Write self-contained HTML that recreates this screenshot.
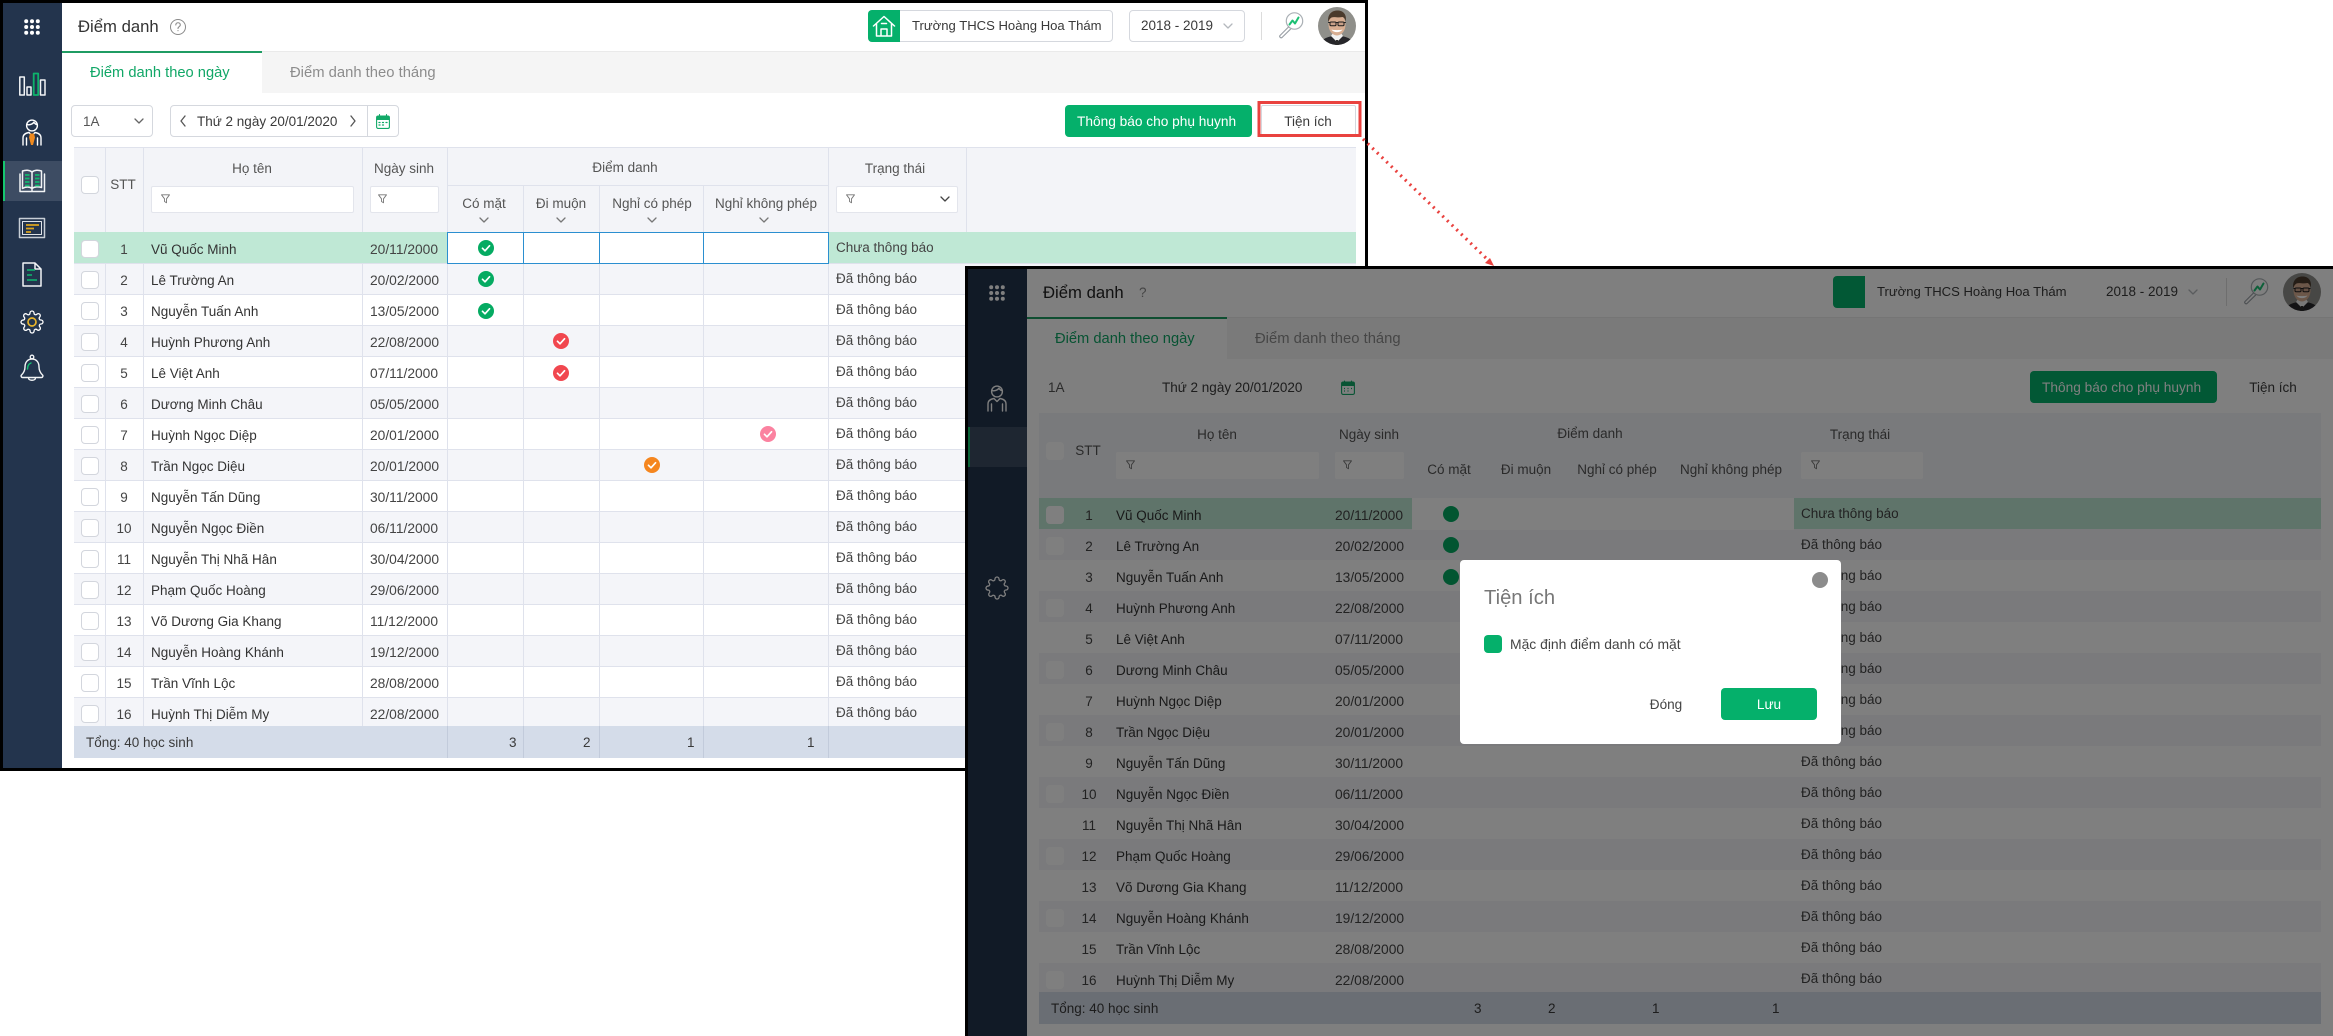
<!DOCTYPE html>
<html lang="vi"><head><meta charset="utf-8"><title>Điểm danh</title>
<style>
*{box-sizing:border-box;margin:0;padding:0}
html,body{width:2333px;height:1036px;overflow:hidden;background:#fff}
body{position:relative;font:13.5px/20px "Liberation Sans","Noto Sans CJK JP",sans-serif;color:#3a3a3a}
.win{position:absolute;background:#000;overflow:hidden}
.w1{left:0;top:0;width:1368px;height:771px}
.w2{left:965px;top:266px;width:1368px;height:770px}
.win>*{position:absolute}
.page{left:3px;top:3px;width:1365px;height:767px;background:#fff}
.w1 .page{width:1362px;height:765px}
.side{left:3px;top:3px;width:59px;height:767px;background:#23344d}
.act{left:3px;top:161px;width:59px;height:40px;background:#3d4c63;border-left:2px solid #16c76f}
.hline{left:62px;top:51px;width:1306px;height:42px;background:#f5f5f5;border-top:1px solid #eaeaea}
.tab{left:62px;top:51px;width:200px;height:42px;background:#fff;border-top:2px solid #1f9c63}
.t{position:absolute;white-space:nowrap;height:20px;line-height:20px}
.c{transform:translateX(-50%)}
.sch{font-size:13.1px}
.box{background:#fff;border:1px solid #d5d8de;border-radius:4px}
.btn{background:#05b06b;border-radius:4px}
.thead{left:74px;top:147px;width:1282px;height:85px;background:#f3f4f8;border-top:1px solid #dfe2ec}
.hl{position:absolute;width:1px;background:#dfe2ec}
.ins{position:absolute;background:#fff;border:1px solid #e3e5ec;border-radius:2px}
.cb{position:absolute;left:7px;width:18px;height:18px;background:#fff;border:1px solid #d3d6dd;border-radius:4px}
.sc{left:74px;top:232px;width:1282px;height:494px;overflow:hidden;background:#fff;z-index:0}
.r{position:absolute;left:0;width:1282px;height:31px;background:#fff;border-top:1px solid #dfe2ec}
.r.e{background:#f4f5f9}
.r.g{background:#bfe8d5;border-top:0;z-index:2}
.r .cb{top:7px}
.r.g .cb{top:8px}
.n,.nm,.d,.st{position:absolute;white-space:nowrap;top:7px}
.n{left:30px;width:40px;text-align:center;color:#444}
.nm{left:77px;color:#333}
.d{left:296px;color:#444;font-size:13.8px}
.st{left:762px;top:5px;color:#444}
.r.g .n,.r.g .nm,.r.g .d{top:8px}
.r.g .st{top:6px}
.cell{position:absolute;left:373px;top:0;width:382px;height:32px;background:#fff;border:1px solid #2b8fd0}
.cell i{position:absolute;top:0;bottom:0;width:1px;background:#2b8fd0}
.vl{position:absolute;top:0;bottom:0;width:1px;background:#dfe2ec;z-index:1}
.foot{left:74px;top:726px;width:1282px;height:32px;background:#d4dce9}
.foot i{position:absolute;top:0;bottom:0;width:1px;background:#c2cbdb}
.ov{left:0;top:0;pointer-events:none}
.ovl{left:0;top:0;width:100%;height:100%;background:rgba(0,0,0,.5)}
.w2 .box,.w2 .ins,.w2 .cb{border-color:transparent}
.w2 .hl,.w2 .vl,.w2 .foot i{display:none}
.w2 .r{border-top-color:transparent}
.w2 .thead{border-top-color:transparent}
.w2 .cell{border-color:transparent}
.w2 .cell i{display:none}
.w2 .box{background:transparent}
.modal{position:absolute;left:1460px;top:560px;width:381px;height:184px;background:#fff;border-radius:4px}
.modal>*{position:absolute}
</style></head><body>

<!-- WINDOW 1 -->
<div class="win w1">
<div class="page"></div>
<div class="side" style="height:765px"></div>
<div class="act"></div>
<div class="t" style="left:78px;top:17px;font-size:16.7px;color:#333">Điểm danh</div>
<div class="hline" style="width:1303px"></div><div class="tab"></div>
<div class="t" style="left:90px;top:63px;font-size:14.7px;color:#11a767">Điểm danh theo ngày</div>
<div class="t" style="left:290px;top:63px;font-size:14.8px;color:#8c8c8c">Điểm danh theo tháng</div>
<div class="box" style="left:868px;top:10px;width:245px;height:32px"></div>
<div style="left:868px;top:10px;width:32px;height:32px;background:#05b06b;border-radius:4px 0 0 4px"></div>
<div class="t sch" style="left:912px;top:16px">Trường THCS Hoàng Hoa Thám</div>
<div class="box" style="left:1129px;top:10px;width:116px;height:32px"></div>
<div class="t" style="left:1141px;top:16px">2018 - 2019</div>
<div style="left:1261px;top:12px;width:1px;height:28px;background:#dcdcdc"></div>
<div class="box" style="left:71px;top:105px;width:82px;height:32px"></div>
<div class="t" style="left:83px;top:112px;color:#555">1A</div>
<div class="box" style="left:170px;top:105px;width:229px;height:32px"></div>
<div style="left:367px;top:105px;width:1px;height:32px;background:#d5d8de"></div>
<div class="t" style="left:197px;top:112px">Thứ 2 ngày 20/01/2020</div>
<div class="btn" style="left:1065px;top:105px;width:187px;height:32px"></div>
<div class="t" style="left:1077px;top:112px;color:#fff;font-size:13.7px">Thông báo cho phụ huynh</div>
<div class="box" style="left:1261px;top:105px;width:95px;height:32px;border-radius:2px"></div>
<div class="t c" style="left:1308px;top:112px">Tiện ích</div>

<div class="thead"></div>
<div class="hl" style="left:105px;top:147px;height:85px"></div>
<div class="hl" style="left:143px;top:147px;height:85px"></div>
<div class="hl" style="left:362px;top:147px;height:85px"></div>
<div class="hl" style="left:447px;top:147px;height:85px"></div>
<div class="hl" style="left:523px;top:186px;height:46px"></div>
<div class="hl" style="left:599px;top:186px;height:46px"></div>
<div class="hl" style="left:703px;top:186px;height:46px"></div>
<div class="hl" style="left:828px;top:147px;height:85px"></div>
<div class="hl" style="left:966px;top:147px;height:85px"></div>
<div style="left:447px;top:185px;width:381px;height:1px;background:#dfe2ec"></div>
<div class="cb" style="left:81px;top:176px"></div>
<div class="t c" style="left:123px;top:175px;color:#555">STT</div>
<div class="t c" style="left:252px;top:159px;color:#555">Họ tên</div>
<div class="t c" style="left:404px;top:159px;color:#555">Ngày sinh</div>
<div class="t c" style="left:625px;top:158px;color:#555">Điểm danh</div>
<div class="t c" style="left:895px;top:159px;color:#555">Trạng thái</div>
<div class="t c" style="left:484px;top:194px;color:#555">Có mặt</div>
<div class="t c" style="left:561px;top:194px;color:#555">Đi muộn</div>
<div class="t c" style="left:652px;top:194px;color:#555">Nghỉ có phép</div>
<div class="t c" style="left:766px;top:194px;color:#555">Nghỉ không phép</div>
<div class="ins" style="left:151px;top:186px;width:203px;height:27px"></div>
<div class="ins" style="left:370px;top:186px;width:69px;height:27px"></div>
<div class="ins" style="left:836px;top:186px;width:122px;height:27px"></div>

<div class="sc">
<i class="vl" style="left:31px"></i><i class="vl" style="left:69px"></i><i class="vl" style="left:288px"></i><i class="vl" style="left:373px"></i><i class="vl" style="left:449px"></i><i class="vl" style="left:525px"></i><i class="vl" style="left:629px"></i><i class="vl" style="left:754px"></i>
<div class="r g" style="top:0"><i class="cb"></i><span class="n">1</span><span class="nm">Vũ Quốc Minh</span><span class="d">20/11/2000</span><div class="cell"><i style="left:75px"></i><i style="left:151px"></i><i style="left:255px"></i></div><span class="st">Chưa thông báo</span></div>
<div class="r e" style="top:31px"><i class="cb"></i><span class="n">2</span><span class="nm">Lê Trường An</span><span class="d">20/02/2000</span><span class="st">Đã thông báo</span></div>
<div class="r" style="top:62px"><i class="cb"></i><span class="n">3</span><span class="nm">Nguyễn Tuấn Anh</span><span class="d">13/05/2000</span><span class="st">Đã thông báo</span></div>
<div class="r e" style="top:93px"><i class="cb"></i><span class="n">4</span><span class="nm">Huỳnh Phương Anh</span><span class="d">22/08/2000</span><span class="st">Đã thông báo</span></div>
<div class="r" style="top:124px"><i class="cb"></i><span class="n">5</span><span class="nm">Lê Việt Anh</span><span class="d">07/11/2000</span><span class="st">Đã thông báo</span></div>
<div class="r e" style="top:155px"><i class="cb"></i><span class="n">6</span><span class="nm">Dương Minh Châu</span><span class="d">05/05/2000</span><span class="st">Đã thông báo</span></div>
<div class="r" style="top:186px"><i class="cb"></i><span class="n">7</span><span class="nm">Huỳnh Ngọc Diệp</span><span class="d">20/01/2000</span><span class="st">Đã thông báo</span></div>
<div class="r e" style="top:217px"><i class="cb"></i><span class="n">8</span><span class="nm">Trần Ngọc Diệu</span><span class="d">20/01/2000</span><span class="st">Đã thông báo</span></div>
<div class="r" style="top:248px"><i class="cb"></i><span class="n">9</span><span class="nm">Nguyễn Tấn Dũng</span><span class="d">30/11/2000</span><span class="st">Đã thông báo</span></div>
<div class="r e" style="top:279px"><i class="cb"></i><span class="n">10</span><span class="nm">Nguyễn Ngọc Điền</span><span class="d">06/11/2000</span><span class="st">Đã thông báo</span></div>
<div class="r" style="top:310px"><i class="cb"></i><span class="n">11</span><span class="nm">Nguyễn Thị Nhã Hân</span><span class="d">30/04/2000</span><span class="st">Đã thông báo</span></div>
<div class="r e" style="top:341px"><i class="cb"></i><span class="n">12</span><span class="nm">Phạm Quốc Hoàng</span><span class="d">29/06/2000</span><span class="st">Đã thông báo</span></div>
<div class="r" style="top:372px"><i class="cb"></i><span class="n">13</span><span class="nm">Võ Dương Gia Khang</span><span class="d">11/12/2000</span><span class="st">Đã thông báo</span></div>
<div class="r e" style="top:403px"><i class="cb"></i><span class="n">14</span><span class="nm">Nguyễn Hoàng Khánh</span><span class="d">19/12/2000</span><span class="st">Đã thông báo</span></div>
<div class="r" style="top:434px"><i class="cb"></i><span class="n">15</span><span class="nm">Trần Vĩnh Lộc</span><span class="d">28/08/2000</span><span class="st">Đã thông báo</span></div>
<div class="r e" style="top:465px"><i class="cb"></i><span class="n">16</span><span class="nm">Huỳnh Thị Diễm My</span><span class="d">22/08/2000</span><span class="st">Đã thông báo</span></div>
</div>
<div class="foot"><i style="left:373px"></i><i style="left:449px"></i><i style="left:525px"></i><i style="left:629px"></i><i style="left:754px"></i></div>
<div class="t" style="left:86px;top:733px">Tổng: 40 học sinh</div>
<div class="t" style="left:509px;top:733px">3</div>
<div class="t" style="left:583px;top:733px">2</div>
<div class="t" style="left:687px;top:733px">1</div>
<div class="t" style="left:807px;top:733px">1</div>

<svg class="ov" width="1368" height="771" fill="none" stroke-linecap="round" stroke-linejoin="round">
<defs>
<symbol id="grid" viewBox="0 0 16 16"><g fill="#fff"><circle cx="2.2" cy="2.2" r="2"/><circle cx="8" cy="2.2" r="2"/><circle cx="13.8" cy="2.2" r="2"/><circle cx="2.2" cy="8" r="2"/><circle cx="8" cy="8" r="2"/><circle cx="13.8" cy="8" r="2"/><circle cx="2.2" cy="13.8" r="2"/><circle cx="8" cy="13.8" r="2"/><circle cx="13.8" cy="13.8" r="2"/></g></symbol>
<symbol id="person" viewBox="0 0 20 27"><g fill="none" stroke="#fff" stroke-width="1.4" stroke-linecap="round" stroke-linejoin="round"><circle cx="10" cy="6.5" r="5.4"/><path d="M4.8 5.6c2 .6 6-.2 7-2.4 1 1.4 2 2.3 3.4 2.4"/><path d="M1 26v-7c0-3.500 3-5 6-5.500M19 26v-7c0-3.500-3-5-6-5.500M4.500 26v-7M15.500 26v-7M7 13.500l3 3 3-3"/></g></symbol>
<symbol id="gear" viewBox="0 0 24 24"><path fill="none" stroke="#fff" stroke-width="1.300" stroke-linejoin="round" d="M19.400 15a1.650 1.650 0 0 0 .33 1.820l.06.06a2 2 0 0 1 0 2.830 2 2 0 0 1-2.830 0l-.06-.06a1.650 1.650 0 0 0-1.820-.33 1.650 1.650 0 0 0-1 1.510V21a2 2 0 0 1-2 2 2 2 0 0 1-2-2v-.09A1.650 1.650 0 0 0 9 19.400a1.650 1.650 0 0 0-1.820.33l-.06.06a2 2 0 0 1-2.830 0 2 2 0 0 1 0-2.830l.06-.06a1.650 1.650 0 0 0 .33-1.820 1.650 1.650 0 0 0-1.510-1H3a2 2 0 0 1-2-2 2 2 0 0 1 2-2h.09A1.650 1.650 0 0 0 4.600 9a1.650 1.650 0 0 0-.33-1.820l-.06-.06a2 2 0 0 1 0-2.830 2 2 0 0 1 2.830 0l.06.06a1.650 1.650 0 0 0 1.820.33H9a1.650 1.650 0 0 0 1-1.510V3a2 2 0 0 1 2-2 2 2 0 0 1 2 2v.09a1.650 1.650 0 0 0 1 1.510 1.650 1.650 0 0 0 1.820-.33l.06-.06a2 2 0 0 1 2.830 0 2 2 0 0 1 0 2.830l-.06.06a1.650 1.650 0 0 0-.33 1.820V9a1.650 1.650 0 0 0 1.510 1H21a2 2 0 0 1 2 2 2 2 0 0 1-2 2h-.09a1.650 1.650 0 0 0-1.510 1z"/></symbol>
<symbol id="cal" viewBox="0 0 14 15"><g fill="none" stroke="#12a968" stroke-width="1.100"><rect x=".6" y="2" width="12.800" height="12.400" rx="1.500"/><path d="M.6 5.500h12.800M3.500.6v2.500M10.500.6v2.500"/><path d="M3 8.500h1M6.500 8.500h1M10 8.500h1M3 11h1M6.500 11h1" stroke-width="1.300"/></g><rect x=".6" y="2" width="12.800" height="3.500" fill="#12a968"/></symbol>
<symbol id="mag" viewBox="0 0 26 27"><g fill="none" stroke-linecap="round" stroke-linejoin="round"><circle cx="16.500" cy="9" r="8.200" stroke="#aab0b5" stroke-width="1.200"/><path d="M10.500 15 2 23.500c-1 1 .5 3 2 2l8.500-8.300" stroke="#999fa5" stroke-width="1.100"/><path d="M11.500 12.500l3-4 2.500 3 3.500-6" stroke="#1bc073" stroke-width="2"/></g></symbol>
<symbol id="avatar" viewBox="0 0 38 38"><clipPath id="avc"><circle cx="19" cy="19" r="19"/></clipPath><g clip-path="url(#avc)"><rect width="38" height="38" fill="#8f8f8a"/><path d="M3 38c0-6 5-8 15-9.500h2c10 1.500 15 3.500 15 9.500z" fill="#26262a"/><path d="M13 29l6 6 6-6-2-3h-8z" fill="#f1f1f1"/><path d="M18 33h2l1 5h-4z" fill="#2a2a2a"/><ellipse cx="19" cy="17.500" rx="8.500" ry="11" fill="#d8ae92"/><path d="M10.200 15c-1-8 4-11.500 9.300-11.500s9.500 3.500 8.300 11c-.8-2.500-1.500-4-3.300-4.500-4.500 1-8.500-.5-11 .5-1.700 1-2.500 2.500-3.300 4.500z" fill="#4a3a2c"/><path d="M10.500 15.500h17" stroke="#222" stroke-width=".9"/><rect x="12" y="15" width="6" height="3.800" rx="1" fill="#c9a088" stroke="#1c1c1c" stroke-width="1"/><rect x="20" y="15" width="6" height="3.800" rx="1" fill="#c9a088" stroke="#1c1c1c" stroke-width="1"/><path d="M13.500 22.500c2 3.500 9 3.500 11 0-2 .8-9 .8-11 0z" fill="#fff"/></g></symbol>
<symbol id="ch" viewBox="0 0 10 6"><path d="M1 1l4 4 4-4" fill="none" stroke="currentColor" stroke-width="1.300" stroke-linecap="round" stroke-linejoin="round"/></symbol>
<symbol id="fun" viewBox="0 0 9 10"><path d="M.5.800h8L5.500 4.800v4l-2-1.300V4.800z" fill="none" stroke="#777" stroke-width=".9" stroke-linejoin="round"/></symbol>
</defs>
<use href="#grid" x="24" y="19" width="16" height="16"/>
<!-- bars -->
<g stroke="#f2f4f6" stroke-width="1.500"><rect x="19.800" y="77" width="4.500" height="18"/><rect x="27" y="87" width="4" height="8"/><rect x="40.500" y="80" width="4.500" height="15"/></g>
<rect x="33.700" y="73.500" width="4.500" height="21.500" stroke="#0db26b" stroke-width="1.800"/>
<use href="#person" x="22" y="119" width="20" height="27"/>
<path d="M30 133.500l-1 4 2 7.500h2l2-7.500-1-4z" fill="#ef8a1f" stroke="none"/>
<!-- book -->
<g stroke="#f2f4f6" stroke-width="1.500"><path d="M20 174v17.500h24.500V174"/><path d="M22.500 187.500V171c3-1.200 7-1.200 9.500 1 2.500-2.200 6.500-2.200 9.500-1v16.500c-3-1-7-1-9.500 1-2.500-2-6.500-2-9.500 0zM32 172v19"/></g>
<g stroke="#10b86f" stroke-width="1.800" stroke-linecap="butt"><path d="M25 175h4.500M25 178.500h4.500M25 182h4.500M25 185.500h4.500M35 175h4.500M35 178.500h4.500M35 182h4.500M35 185.500h4.500"/></g>
<!-- card -->
<rect x="19.500" y="218.500" width="25" height="19" stroke="#c7ced6" stroke-width="1.500"/><rect x="22.500" y="221.500" width="19" height="13" stroke="#dfe3e8" stroke-width="1"/>
<g stroke="#dca41f" stroke-width="1.800" stroke-linecap="butt"><path d="M26 225h13M26 228.500h8M26 232h5"/></g>
<!-- doc -->
<path d="M23 263h12l6 6v17H23zM35 263v6h6" stroke="#f2f4f6" stroke-width="1.500"/>
<g stroke="#10b86f" stroke-width="1.500" stroke-linecap="butt"><path d="M27 270h8M27 275h5M27 280h10"/></g>
<use href="#gear" x="20" y="310" width="24" height="24"/>
<circle cx="32" cy="322" r="4" stroke="#e9b52b" stroke-width="1.700"/>
<!-- bell -->
<circle cx="32" cy="357" r="1.800" stroke="#f2f4f6" stroke-width="1.300"/>
<path d="M32 359c-5 0-7 4-7 8 0 4-1.500 6-3.500 8-1 1 0 2.500 1 2.500h19c1 0 2-1.500 1-2.500-2-2-3.500-4-3.500-8 0-4-2-8-7-8zM28.500 378c0 3 7 3 7 0" stroke="#f2f4f6" stroke-width="1.400"/>
<path d="M27.500 369c0-3 1-5 3.500-6" stroke="#14c074" stroke-width="1.400"/>
<!-- help -->
<circle cx="178" cy="27" r="7.500" stroke="#8a8a8a" stroke-width="1"/>
<path d="M175.800 25c0-3 4.500-3 4.500 0 0 1.500-2.300 1.700-2.300 3.500M178 30.500v.2" stroke="#8a8a8a" stroke-width="1.100"/>
<!-- house -->
<path d="M873.500 26 884 16.500 894.500 26M876.500 24v12h15V24M881 36v-7h6v7M881.500 23.500h5" stroke="#fff" stroke-width="1.500"/>
<use href="#ch" x="1223" y="23" width="10" height="6" color="#b4b8bd"/>
<use href="#mag" x="1278" y="12" width="26" height="27"/>
<use href="#avatar" x="1318" y="7" width="38" height="38"/>
<use href="#ch" x="134" y="118" width="10" height="6" color="#666"/>
<path d="M185 116l-4 5 4 5M351 116l4 5-4 5" stroke="#555" stroke-width="1.300"/>
<use href="#cal" x="376" y="114" width="14" height="15"/>
<use href="#ch" x="479" y="217" width="10" height="6" color="#777"/>
<use href="#ch" x="556" y="217" width="10" height="6" color="#777"/>
<use href="#ch" x="647" y="217" width="10" height="6" color="#777"/>
<use href="#ch" x="759" y="217" width="10" height="6" color="#777"/>
<use href="#ch" x="940" y="196" width="10" height="6" color="#444"/>
<use href="#fun" x="161" y="194" width="9" height="10"/>
<use href="#fun" x="378" y="194" width="9" height="10"/>
<use href="#fun" x="846" y="194" width="9" height="10"/>
<!-- marks -->
<g fill="#05ab62"><circle cx="486" cy="248" r="8"/><circle cx="486" cy="279" r="8"/><circle cx="486" cy="311" r="8"/></g>
<circle cx="561" cy="341" r="8" fill="#f1474f"/><circle cx="561" cy="373" r="8" fill="#f1474f"/>
<circle cx="652" cy="465" r="8" fill="#f5861f"/><circle cx="768" cy="434" r="8" fill="#fb82a0"/>
<g stroke="#fff" stroke-width="1.700"><path d="M482.500 248.300l2.500 2.500 4.500-5M482.500 279.300l2.500 2.500 4.500-5M482.500 311.300l2.500 2.500 4.500-5M557.500 341.300l2.500 2.500 4.500-5M557.500 373.300l2.500 2.500 4.500-5M648.500 465.300l2.500 2.500 4.500-5M764.500 434.300l2.500 2.500 4.500-5"/></g>
</svg>
</div>

<!-- red highlight + dotted arrow -->
<svg style="position:absolute;left:0;top:0" width="2333" height="1036" fill="none">
<rect x="1259" y="102.500" width="101" height="33" stroke="#e9423f" stroke-width="3"/>
<path d="M1363 139 1487 259" stroke="#e9423f" stroke-width="3.200" stroke-dasharray="2 4.500" stroke-linecap="butt"/>
<path d="M1494 266l-9-3 5-5z" fill="#e9423f"/>
</svg>

<!-- WINDOW 2 -->
<div class="win w2">
<div class="page"></div>
<div class="side"></div>
<div class="act"></div>
<div class="t" style="left:78px;top:17px;font-size:16.7px;color:#222">Điểm danh</div>
<div class="t" style="left:174px;top:17px;color:#888">?</div>
<div class="hline"></div><div class="tab"></div>
<div class="t" style="left:90px;top:63px;font-size:14.7px;color:#11a767">Điểm danh theo ngày</div>
<div class="t" style="left:290px;top:63px;font-size:14.8px;color:#8c8c8c">Điểm danh theo tháng</div>
<div style="left:868px;top:10px;width:32px;height:32px;background:#05b06b;border-radius:4px 0 0 4px"></div>
<div class="t sch" style="left:912px;top:16px">Trường THCS Hoàng Hoa Thám</div>
<div class="t" style="left:1141px;top:16px">2018 - 2019</div>
<div style="left:1261px;top:12px;width:1px;height:28px;background:#dcdcdc"></div>
<div class="t" style="left:83px;top:112px;color:#555">1A</div>
<div class="t" style="left:197px;top:112px">Thứ 2 ngày 20/01/2020</div>
<div class="btn" style="left:1065px;top:105px;width:187px;height:32px"></div>
<div class="t" style="left:1077px;top:112px;color:#fff;font-size:13.7px">Thông báo cho phụ huynh</div>
<div class="t c" style="left:1308px;top:112px">Tiện ích</div>

<div class="thead"></div>
<div class="cb" style="left:81px;top:176px"></div>
<div class="t c" style="left:123px;top:175px;color:#555">STT</div>
<div class="t c" style="left:252px;top:159px;color:#555">Họ tên</div>
<div class="t c" style="left:404px;top:159px;color:#555">Ngày sinh</div>
<div class="t c" style="left:625px;top:158px;color:#555">Điểm danh</div>
<div class="t c" style="left:895px;top:159px;color:#555">Trạng thái</div>
<div class="t c" style="left:484px;top:194px;color:#555">Có mặt</div>
<div class="t c" style="left:561px;top:194px;color:#555">Đi muộn</div>
<div class="t c" style="left:652px;top:194px;color:#555">Nghỉ có phép</div>
<div class="t c" style="left:766px;top:194px;color:#555">Nghỉ không phép</div>
<div class="ins" style="left:151px;top:186px;width:203px;height:27px"></div>
<div class="ins" style="left:370px;top:186px;width:69px;height:27px"></div>
<div class="ins" style="left:836px;top:186px;width:122px;height:27px"></div>

<div class="sc">
<div class="r g" style="top:0"><i class="cb"></i><span class="n">1</span><span class="nm">Vũ Quốc Minh</span><span class="d">20/11/2000</span><div class="cell"></div><span class="st">Chưa thông báo</span></div>
<div class="r e" style="top:31px"><i class="cb"></i><span class="n">2</span><span class="nm">Lê Trường An</span><span class="d">20/02/2000</span><span class="st">Đã thông báo</span></div>
<div class="r" style="top:62px"><i class="cb"></i><span class="n">3</span><span class="nm">Nguyễn Tuấn Anh</span><span class="d">13/05/2000</span><span class="st">Đã thông báo</span></div>
<div class="r e" style="top:93px"><i class="cb"></i><span class="n">4</span><span class="nm">Huỳnh Phương Anh</span><span class="d">22/08/2000</span><span class="st">Đã thông báo</span></div>
<div class="r" style="top:124px"><i class="cb"></i><span class="n">5</span><span class="nm">Lê Việt Anh</span><span class="d">07/11/2000</span><span class="st">Đã thông báo</span></div>
<div class="r e" style="top:155px"><i class="cb"></i><span class="n">6</span><span class="nm">Dương Minh Châu</span><span class="d">05/05/2000</span><span class="st">Đã thông báo</span></div>
<div class="r" style="top:186px"><i class="cb"></i><span class="n">7</span><span class="nm">Huỳnh Ngọc Diệp</span><span class="d">20/01/2000</span><span class="st">Đã thông báo</span></div>
<div class="r e" style="top:217px"><i class="cb"></i><span class="n">8</span><span class="nm">Trần Ngọc Diệu</span><span class="d">20/01/2000</span><span class="st">Đã thông báo</span></div>
<div class="r" style="top:248px"><i class="cb"></i><span class="n">9</span><span class="nm">Nguyễn Tấn Dũng</span><span class="d">30/11/2000</span><span class="st">Đã thông báo</span></div>
<div class="r e" style="top:279px"><i class="cb"></i><span class="n">10</span><span class="nm">Nguyễn Ngọc Điền</span><span class="d">06/11/2000</span><span class="st">Đã thông báo</span></div>
<div class="r" style="top:310px"><i class="cb"></i><span class="n">11</span><span class="nm">Nguyễn Thị Nhã Hân</span><span class="d">30/04/2000</span><span class="st">Đã thông báo</span></div>
<div class="r e" style="top:341px"><i class="cb"></i><span class="n">12</span><span class="nm">Phạm Quốc Hoàng</span><span class="d">29/06/2000</span><span class="st">Đã thông báo</span></div>
<div class="r" style="top:372px"><i class="cb"></i><span class="n">13</span><span class="nm">Võ Dương Gia Khang</span><span class="d">11/12/2000</span><span class="st">Đã thông báo</span></div>
<div class="r e" style="top:403px"><i class="cb"></i><span class="n">14</span><span class="nm">Nguyễn Hoàng Khánh</span><span class="d">19/12/2000</span><span class="st">Đã thông báo</span></div>
<div class="r" style="top:434px"><i class="cb"></i><span class="n">15</span><span class="nm">Trần Vĩnh Lộc</span><span class="d">28/08/2000</span><span class="st">Đã thông báo</span></div>
<div class="r e" style="top:465px"><i class="cb"></i><span class="n">16</span><span class="nm">Huỳnh Thị Diễm My</span><span class="d">22/08/2000</span><span class="st">Đã thông báo</span></div>
</div>
<div class="foot"></div>
<div class="t" style="left:86px;top:733px">Tổng: 40 học sinh</div>
<div class="t" style="left:509px;top:733px">3</div>
<div class="t" style="left:583px;top:733px">2</div>
<div class="t" style="left:687px;top:733px">1</div>
<div class="t" style="left:807px;top:733px">1</div>

<svg class="ov" width="1368" height="770" fill="none">
<use href="#grid" x="24" y="19" width="16" height="16"/>
<use href="#person" x="22" y="119" width="20" height="27"/>
<use href="#gear" x="20" y="310" width="24" height="24"/>
<use href="#ch" x="1223" y="23" width="10" height="6" color="#b4b8bd"/>
<use href="#mag" x="1278" y="12" width="26" height="27"/>
<use href="#avatar" x="1318" y="7" width="38" height="38"/>
<use href="#cal" x="376" y="114" width="14" height="15"/>
<use href="#fun" x="161" y="194" width="9" height="10"/>
<use href="#fun" x="378" y="194" width="9" height="10"/>
<use href="#fun" x="846" y="194" width="9" height="10"/>
<g fill="#05ab62"><circle cx="486" cy="248" r="8"/><circle cx="486" cy="279" r="8"/><circle cx="486" cy="311" r="8"/></g>
</svg>
<div class="ovl"></div>
</div>

<!-- MODAL -->
<div class="modal">
<div style="left:352px;top:12px;width:16px;height:16px;border-radius:50%;background:#8c8c8c"></div>
<div class="t" style="left:24px;top:26px;height:24px;line-height:24px;font-size:20.2px;color:#777">Tiện ích</div>
<div style="left:24px;top:75px;width:18px;height:18px;border-radius:4px;background:#05b06b"></div>
<div class="t" style="left:50px;top:74px;font-size:13.9px;color:#444">Mặc định điểm danh có mặt</div>
<div class="t c" style="left:206px;top:135px;font-size:13.6px;color:#444">Đóng</div>
<div class="btn" style="left:261px;top:128px;width:96px;height:32px"></div>
<div class="t c" style="left:309px;top:135px;font-size:13.6px;color:#fff">Lưu</div>
</div>
</body></html>
